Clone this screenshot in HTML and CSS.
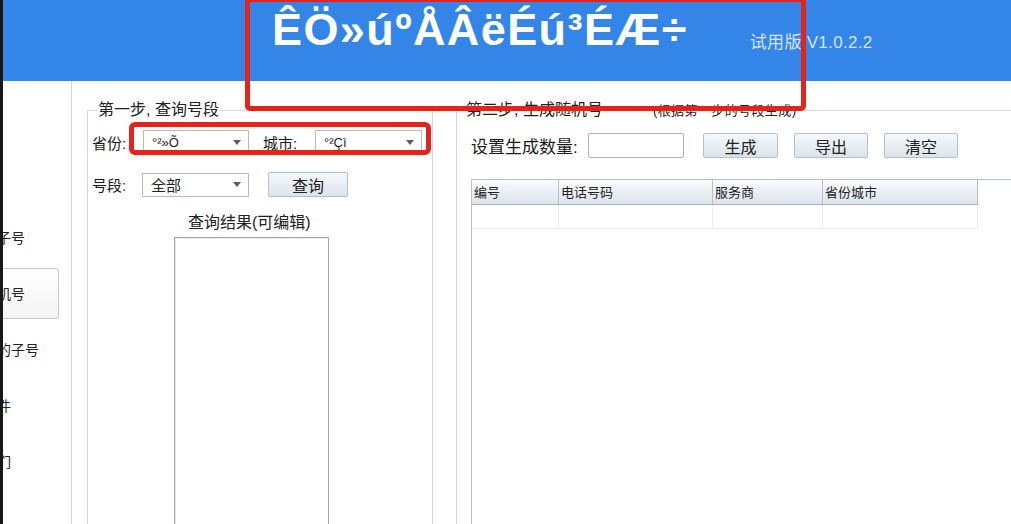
FILE: index.html
```html
<!DOCTYPE html>
<html lang="zh-CN">
<head>
<meta charset="utf-8">
<title>手机号码生成器</title>
<link rel="stylesheet" href="styles.css">
</head>
<body>
<div class="app">
  <div class="edge"></div>
  <div class="window">
    <header class="topbar">
      <h1 class="title">ÊÖ»úºÅÂëÉú³ÉÆ÷</h1>
      <span class="version">试用版 V1.0.2.2</span>
    </header>
    <div class="content">
      <nav class="sidebar">
        <div class="nav-item">生成子号</div>
        <div class="nav-item active">生成机号</div>
        <div class="nav-item">生成的子号</div>
        <div class="nav-item">导文件</div>
        <div class="nav-item">关我们</div>
      </nav>

      <fieldset class="group step1">
        <legend>第一步, 查询号段</legend>
        <div class="row area-row">
          <span class="lbl lbl-prov">省份:</span>
          <div class="combo combo-prov"><span class="garbled">°²»Õ</span><i class="arrow"></i></div>
          <span class="lbl lbl-city">城市:</span>
          <div class="combo combo-city"><span class="garbled">°²Çì</span><i class="arrow"></i></div>
        </div>
        <div class="row seg-row">
          <span class="lbl lbl-seg">号段:</span>
          <div class="combo combo-seg"><span>全部</span><i class="arrow"></i></div>
          <button class="btn btn-query">查询</button>
        </div>
        <div class="result-title">查询结果(可编辑)</div>
        <div class="result-box"></div>
      </fieldset>

      <fieldset class="group step2">
        <legend>第二步, 生成随机号<span class="note">(根据第一步的号段生成)</span></legend>
        <div class="row gen-row">
          <span class="lbl lbl-count">设置生成数量:</span>
          <div class="count-input"></div>
          <button class="btn btn-act">生成</button>
          <button class="btn btn-act">导出</button>
          <button class="btn btn-act">清空</button>
        </div>
        <div class="listview">
          <div class="lv-head">
            <div class="lv-cell col-no">编号</div>
            <div class="lv-cell col-phone">电话号码</div>
            <div class="lv-cell col-isp">服务商</div>
            <div class="lv-cell col-region">省份城市</div>
          </div>
          <div class="lv-row">
            <div class="lv-cell col-no"></div>
            <div class="lv-cell col-phone"></div>
            <div class="lv-cell col-isp"></div>
            <div class="lv-cell col-region"></div>
          </div>
        </div>
      </fieldset>
    </div>
  </div>
  <div class="mark mark-title"></div>
  <div class="mark mark-area"></div>
</div>
</body>
</html>
```

FILE: styles.css
```css
* { box-sizing: border-box; }
html, body { margin: 0; height: 100%; overflow: hidden; background: #fff; }
body {
  font-family: "Liberation Sans", "Noto Sans CJK SC", sans-serif;
  color: #1f1f1f;
}

.app { position: relative; display: flex; height: 524px; overflow: hidden; }
.edge { width: 3px; flex-shrink: 0; background: #171717; }
.window { flex: 1; min-width: 0; display: flex; flex-direction: column; overflow: hidden; }

/* header */
.topbar {
  height: 81px; flex-shrink: 0; background: #3485e8;
  display: flex; align-items: flex-start; padding-left: 269px;
}
.title {
  margin: 0; padding-top: 6px;
  font: bold 45px/47px "Liberation Sans", sans-serif;
  letter-spacing: 1.4px; color: #fff; white-space: nowrap;
}
.version {
  margin-left: 62px; padding-top: 33px;
  font-size: 17px; line-height: 20px; color: #d4e4f8; white-space: nowrap;
  letter-spacing: 0.3px;
}

/* body */
.content { flex: 1; display: flex; align-items: flex-start; min-height: 0; }

.sidebar {
  width: 69px; flex-shrink: 0; align-self: stretch;
  border-right: 1px solid #d6d6d6; overflow: hidden; padding-top: 131px;
}
.nav-item {
  margin-left: -40px; width: 96px; height: 51px; margin-bottom: 5px;
  padding-left: 5px; font-family: "Noto Sans CJK SC", sans-serif;
  font-size: 14px; line-height: 49px; white-space: nowrap;
  border: 1px solid transparent; border-radius: 3px; color: #222;
}
.nav-item.active { border-color: #c9c9c9; background: linear-gradient(#fff, #f4f4f4); }

/* group boxes */
.group {
  margin: 19px 0 0; border: 1px solid #d3d9df; padding: 0;
  min-width: 0; height: 520px; flex-shrink: 0;
}
.group legend {
  padding: 0 1px; font-family: "Liberation Sans", "Noto Sans CJK SC", sans-serif;
  font-size: 16px; line-height: 20px; color: #222; white-space: nowrap;
}
.step1 { margin-left: 15px; width: 346px; padding-left: 4px; }
.step1 legend { margin-left: 5px; }
.step2 { margin-left: 23px; width: 640px; padding-left: 14px; }
.step2 legend { margin-left: -6px; }
.note { margin-left: 50px; font-size: 13px; letter-spacing: 0.4px; }

.row { display: flex; align-items: center; }
.lbl { flex-shrink: 0; font-size: 15px; color: #1a1a1a; }
.area-row { margin-top: 10px; height: 24px; }
.lbl-prov { width: 51px; }
.lbl-city { width: 52px; margin-left: 14px; }
.seg-row { margin-top: 18px; height: 25px; }
.lbl-seg { width: 50px; }

.combo {
  height: 24px; border: 1px solid #bababa; background: #fff;
  display: flex; align-items: center; padding-left: 8px;
  font-family: "Noto Sans CJK SC", sans-serif; font-size: 15px; color: #222;
}
.combo-prov { width: 106px; }
.combo-city { width: 107px; }
.combo-seg { width: 107px; }
.garbled { font-family: "Liberation Sans", sans-serif; font-size: 13px; }
.arrow {
  margin-left: auto; margin-right: 7px; width: 0; height: 0;
  border-left: 4.5px solid transparent; border-right: 4.5px solid transparent;
  border-top: 5px solid #5c5c5c;
}

.btn {
  height: 25px; padding: 0; border: 1px solid #b6c0ca; border-radius: 2px;
  background: linear-gradient(#f5f8fa, #dce4eb);
  font-family: "Noto Sans CJK SC", sans-serif; font-size: 16px; color: #222;
}
.btn-query { width: 80px; margin-left: 19px; }

.result-title {
  margin-top: 16px; padding-left: 96px; font-size: 16px; line-height: 20px; color: #222;
}
.result-box {
  margin: 4px 0 0 82px; width: 155px; height: 300px;
  border: 1px solid #a9a9a9; box-shadow: inset 1px 1px 0 #e6e6e6;
  background: #fff;
}

/* step 2 */
.gen-row { margin-top: 12px; height: 25px; }
.lbl-count { width: 117px; font-size: 17px; }
.count-input {
  width: 96px; height: 25px; border: 1px solid #b3b3b3; border-radius: 2px;
  margin-right: 19px; background: #fff;
}
.btn-act { width: 74px; }
.btn-act:first-of-type { width: 75px; }
.btn-act + .btn-act { margin-left: 16px; }

.listview {
  margin-top: 21px; height: 360px;
  border-top: 1px solid #b9c0c7; border-left: 1px solid #b9c0c7;
}
.lv-head {
  display: flex; width: 506px; height: 25px;
  border-bottom: 1px solid #a6b0ba;
  background: linear-gradient(#fbfcfd, #dbe3eb);
}
.lv-head .lv-cell {
  border-right: 1px solid #b8c1ca; padding-left: 2px;
  font-family: "Noto Sans CJK SC", sans-serif; font-size: 13px; line-height: 24px; color: #222;
}
.lv-row { display: flex; width: 506px; height: 24px; border-bottom: 1px solid #ececec; }
.lv-row .lv-cell { border-right: 1px solid #ececec; }
.col-no { width: 87px; }
.col-phone { width: 154px; }
.col-isp { width: 110px; }
.col-region { width: 155px; }

/* red annotation boxes drawn over the screenshot */
.mark { position: absolute; border: 5px solid #e4231b; border-radius: 5px; pointer-events: none; }
.mark-title { left: 245px; top: -3px; width: 561px; height: 114px; }
.mark-area { left: 129px; top: 122px; width: 302px; height: 33px; border-radius: 6px; }
```
